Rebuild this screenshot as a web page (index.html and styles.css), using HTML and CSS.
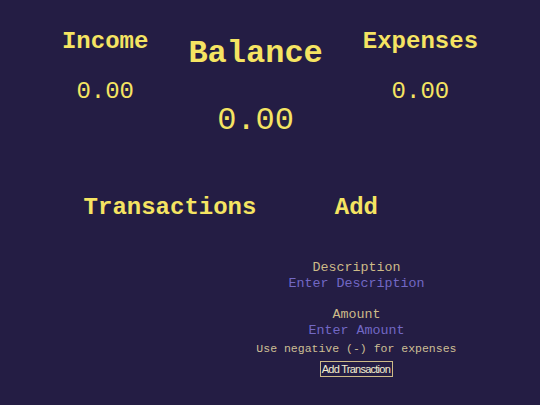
FILE: index.html
```html
<!DOCTYPE html>
<html>
<head>
<meta charset="utf-8">
<link rel="stylesheet" href="styles.css">
</head>
<body>
<div class="summary">
  <div class="col">
    <h2 class="head income">Income</h2>
    <p class="val">0.00</p>
  </div>
  <div class="col">
    <h1 class="big-head">Balance</h1>
    <p class="big-val">0.00</p>
  </div>
  <div class="col">
    <h2 class="head income">Expenses</h2>
    <p class="val">0.00</p>
  </div>
</div>
<div class="main">
  <div class="list">
    <h2 class="head">Transactions</h2>
  </div>
  <div class="add">
    <h2 class="head">Add</h2>
    <form class="form">
      <label class="label">Description</label>
      <input class="field" type="text" placeholder="Enter Description">
      <label class="label spaced">Amount</label>
      <input class="field" type="text" placeholder="Enter Amount">
      <span class="note">Use negative (-) for expenses</span>
      <button class="btn" type="button">Add Transaction</button>
    </form>
  </div>
</div>
</body>
</html>
```
FILE: styles.css
```css
html, body {
  margin: 0;
  padding: 0;
  background: #241d44;
}
body {
  font-family: "Courier New", "Liberation Mono", monospace;
  color: #f5e462;
  width: 540px;
  height: 405px;
  overflow: hidden;
  padding-top: 2px;
  box-sizing: border-box;
}
.summary {
  display: flex;
  justify-content: center;
  align-items: flex-start;
  gap: 40px;
}
.col {
  display: flex;
  flex-direction: column;
  align-items: center;
}
.head {
  font-size: 24px;
  font-weight: bold;
  margin: 0;
  line-height: 27px;
}
.income {
  margin-top: 26px;
}
.val {
  font-size: 24px;
  margin: 23px 0 0 0;
  line-height: 27px;
}
.big-head {
  font-size: 32px;
  font-weight: bold;
  margin: 34px 0 0 0;
  line-height: 36px;
}
.big-val {
  font-size: 32px;
  margin: 31px 0 0 0;
  line-height: 36px;
}
.main {
  display: flex;
  justify-content: center;
  align-items: flex-start;
  margin-top: 55px;
}
.list, .add {
  display: flex;
  flex-direction: column;
  align-items: center;
}
.form {
  display: flex;
  flex-direction: column;
  align-items: center;
  margin-top: 39px;
  width: 200px;
}
.label {
  font-size: 13.33px;
  color: #cdbb88;
  line-height: 16px;
}
.spaced {
  margin-top: 15px;
}
.field {
  font-family: inherit;
  font-size: 13.33px;
  background: transparent;
  border: none;
  padding: 0;
  margin: 0;
  text-align: center;
  width: 200px;
  line-height: 16px;
  height: 16px;
  color: #f5e462;
  outline: none;
}
.field::placeholder {
  color: #7268c4;
}
.note {
  font-size: 11.5px;
  color: #cdbf95;
  line-height: 14px;
  margin-top: 3px;
  white-space: nowrap;
}
.btn {
  margin-top: 5px;
  font-family: "Liberation Sans", Arial, sans-serif;
  font-size: 11px;
  letter-spacing: -0.75px;
  color: #f3edd0;
  background: #241d44;
  border: 1px solid #cdbb88;
  padding: 1px 2px 1px 1px;
  line-height: 12px;
}
```
